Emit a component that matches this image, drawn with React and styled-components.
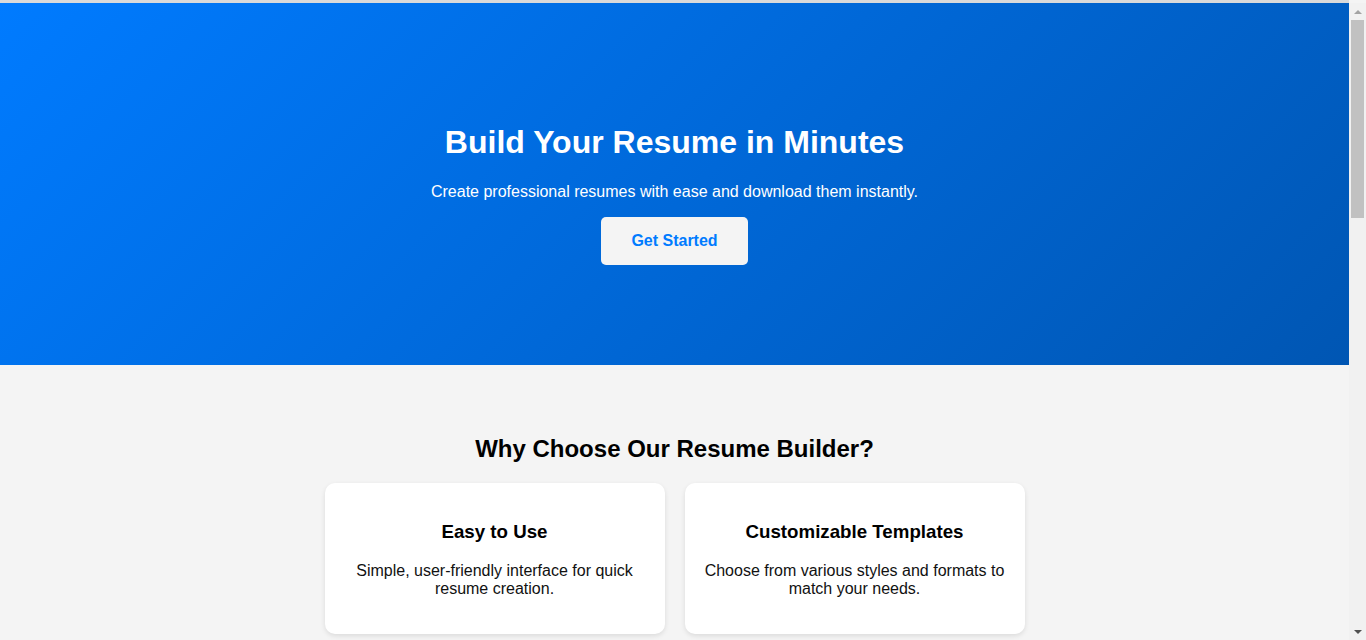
import React from "react";
import styled, { createGlobalStyle } from "styled-components";

const Global = createGlobalStyle`
  html, body { margin: 0; padding: 0; }
  body {
    font-family: "Liberation Sans", Arial, sans-serif;
    background: #f4f4f4;
    color: #000;
    border-top: 3px solid #dadada;
    margin-right: 17px;
  }
  * { box-sizing: border-box; }
`;

const ScrollTrack = styled.div`
  position: fixed;
  top: 3px;
  right: 0;
  bottom: 0;
  width: 17px;
  background: #f1f1f1;
  display: flex;
  flex-direction: column;
  align-items: center;
  z-index: 10;
`;

const Arrow = styled.div`
  height: 17px;
  width: 17px;
  flex: none;
  display: flex;
  align-items: center;
  justify-content: center;
  &::before {
    content: "";
    width: 0;
    height: 0;
    border-left: 4px solid transparent;
    border-right: 4px solid transparent;
    ${(p) =>
      p.$down
        ? "border-top: 4px solid #505050;"
        : "border-bottom: 4px solid #a3a3a3;"}
  }
`;

const Thumb = styled.div`
  width: 13px;
  height: 198px;
  background: #c1c1c1;
`;

const Spacer = styled.div`
  flex: 1;
`;

const Hero = styled.header`
  background: linear-gradient(135deg, #007bff, #0056b3);
  color: #fff;
  text-align: center;
  padding: 100px 20px;
  height: 362px;
`;

const HeroTitle = styled.h1`
  font-size: 32px;
  margin: 21.44px 0;
  font-weight: bold;
`;

const HeroText = styled.p`
  font-size: 16px;
  margin: 16px 0;
`;

const PrimaryButton = styled.button`
  font-family: inherit;
  font-size: 16px;
  font-weight: bold;
  color: #007bff;
  background: #f4f4f4;
  border: none;
  border-radius: 5px;
  padding: 15px 30px;
  cursor: pointer;
  line-height: 18px;
`;

const Section = styled.section`
  padding: 50px 20px;
  text-align: center;
  background: ${(p) => p.$bg || "#f4f4f4"};
`;

const SectionTitle = styled.h2`
  font-size: 24px;
  margin: 19.92px 0;
`;

const CardRow = styled.div`
  display: flex;
  flex-wrap: wrap;
  justify-content: center;
  gap: 20px;
  max-width: 1000px;
  margin: 0 auto;
`;

const Card = styled.div`
  width: 340px;
  background: #fff;
  border-radius: 10px;
  padding: 20px;
  box-shadow: 0 2px 5px rgba(0, 0, 0, 0.1);
`;

const CardTitle = styled.h3`
  font-size: 18.72px;
  margin: 17.7px 0 19.7px;
`;

const CardText = styled.p`
  font-size: 16px;
  margin: 16px 0;
  color: #111;
`;

const Form = styled.form`
  max-width: 600px;
  margin: 0 auto;
  background: #fff;
  border-radius: 10px;
  padding: 30px;
  box-shadow: 0 2px 5px rgba(0, 0, 0, 0.1);
  display: flex;
  flex-direction: column;
  gap: 16px;
  text-align: left;
`;

const Label = styled.label`
  display: flex;
  flex-direction: column;
  gap: 6px;
  font-size: 15px;
  font-weight: bold;
`;

const Input = styled.input`
  font-family: inherit;
  font-size: 15px;
  padding: 10px;
  border: 1px solid #ccc;
  border-radius: 5px;
`;

const TextArea = styled.textarea`
  font-family: inherit;
  font-size: 15px;
  padding: 10px;
  border: 1px solid #ccc;
  border-radius: 5px;
  height: 110px;
  resize: none;
`;

const SubmitButton = styled.button`
  font-family: inherit;
  font-size: 16px;
  font-weight: bold;
  color: #fff;
  background: #007bff;
  border: none;
  border-radius: 5px;
  padding: 14px 30px;
  align-self: center;
`;

const Footer = styled.footer`
  background: #333;
  color: #fff;
  text-align: center;
  padding: 20px;
  font-size: 14px;
`;

const features = [
  { title: "Easy to Use", text: "Simple, user-friendly interface for quick resume creation." },
  { title: "Customizable Templates", text: "Choose from various styles and formats to match your needs." },
  { title: "Download Instantly", text: "Export your resume as a PDF in a single click." },
];

export default function App() {
  return (
    <>
      <Global />
      <ScrollTrack aria-hidden="true">
        <Arrow />
        <Thumb />
        <Spacer />
        <Arrow $down />
      </ScrollTrack>
      <Hero>
        <HeroTitle>Build Your Resume in Minutes</HeroTitle>
        <HeroText>Create professional resumes with ease and download them instantly.</HeroText>
        <PrimaryButton>Get Started</PrimaryButton>
      </Hero>
      <Section>
        <SectionTitle>Why Choose Our Resume Builder?</SectionTitle>
        <CardRow>
          {features.map((f) => (
            <Card key={f.title}>
              <CardTitle>{f.title}</CardTitle>
              <CardText>{f.text}</CardText>
            </Card>
          ))}
        </CardRow>
      </Section>
      <Section $bg="#fff">
        <SectionTitle>Create Your Resume</SectionTitle>
        <Form onSubmit={(e) => e.preventDefault()}>
          <Label>Full Name<Input placeholder="John Doe" /></Label>
          <Label>Email<Input placeholder="john@example.com" /></Label>
          <Label>Phone<Input placeholder="(123) 456-7890" /></Label>
          <Label>Summary<TextArea placeholder="A short professional summary" /></Label>
          <Label>Experience<TextArea placeholder="Your work experience" /></Label>
          <Label>Education<TextArea placeholder="Your education" /></Label>
          <Label>Skills<Input placeholder="e.g. JavaScript, React" /></Label>
          <SubmitButton>Download Resume</SubmitButton>
        </Form>
      </Section>
      <Footer>© 2024 Resume Builder. All rights reserved.</Footer>
    </>
  );
}
